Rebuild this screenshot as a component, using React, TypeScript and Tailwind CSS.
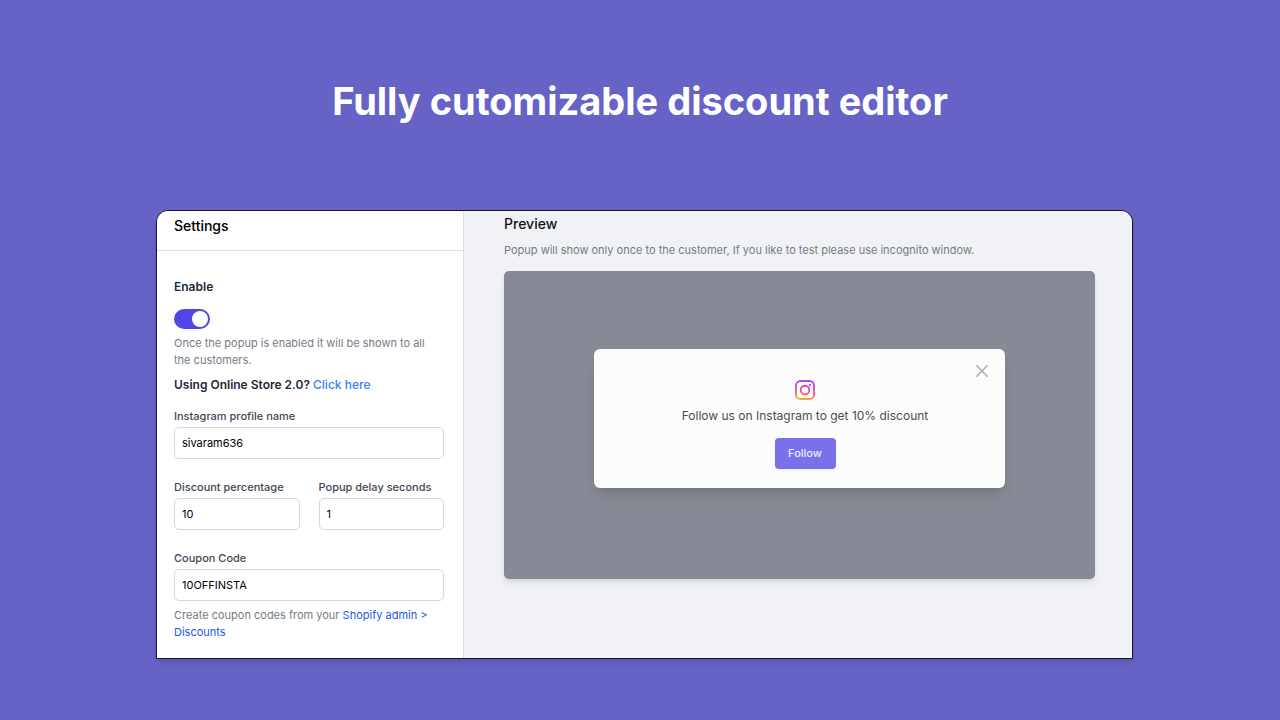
import { useState } from 'react';

const INPUT = 'block w-full h-8 rounded-[5px] border border-[#d5d7e0] bg-white px-[7px] text-[11px] text-black';
const LABEL = 'block mb-[3px] text-[11px] leading-4 font-medium text-[#414855]';
const HINT = 'mt-[6px] text-[11px] leading-[17px] text-[#747b88]';

function InstagramIcon() {
  return (
    <svg viewBox="0 0 20 20" className="size-5" fill="none" stroke="url(#insta)" aria-hidden="true">
      <defs>
        <linearGradient id="insta" gradientUnits="userSpaceOnUse" x1="11" y1="0" x2="8" y2="20">
          <stop offset="0" stopColor="#a348f5" />
          <stop offset="0.35" stopColor="#e545c4" />
          <stop offset="0.65" stopColor="#fb5a78" />
          <stop offset="1" stopColor="#fdb52e" />
        </linearGradient>
      </defs>
      <rect x="1" y="1" width="18" height="18" rx="4.6" strokeWidth="1.9" />
      <circle cx="10" cy="10" r="4.3" strokeWidth="1.9" />
      <circle cx="15" cy="5" r="1.2" fill="#d64bdc" stroke="none" />
    </svg>
  );
}

function SettingsPanel() {
  const [enabled, setEnabled] = useState(true);
  const [profile, setProfile] = useState('sivaram636');
  const [percentage, setPercentage] = useState('10');
  const [delay, setDelay] = useState('1');
  const [coupon, setCoupon] = useState('10OFFINSTA');

  return (
    <aside className="w-[307px] shrink-0 bg-white border-r border-[#dcdee5] pb-[17px]">
      <div className="px-[17px] pt-[3px] pb-3 border-b border-[#dcdee5]">
        <h2 className="text-[14px] leading-6 font-medium text-black">Settings</h2>
      </div>

      <form className="pl-[17px] pr-[19px] pt-[26px]">
        <label htmlFor="enable" className="block text-[12px] leading-5 font-semibold text-[#222937]">Enable</label>
        <div className="relative mt-3 h-5 w-9">
          <input
            id="enable"
            type="checkbox"
            role="switch"
            checked={enabled}
            onChange={(e) => setEnabled(e.target.checked)}
            className="peer block h-5 w-9 appearance-none rounded-full bg-gray-300 checked:bg-[#4f46e5] cursor-pointer"
          />
          <span className="pointer-events-none absolute left-0.5 top-0.5 size-4 rounded-full bg-white transition peer-checked:translate-x-4" />
        </div>
        <p className={HINT}>
          Once the popup is enabled it will be shown to all the customers.
        </p>
        <p className="mt-[6px] text-[12px] leading-5 font-semibold text-[#222937]">
          Using Online Store 2.0? <a href="#" className="font-medium text-[#3b82f6]">Click here</a>
        </p>

        <div className="mt-[13px]">
          <label htmlFor="profile" className={LABEL}>Instagram profile name</label>
          <input id="profile" className={INPUT} value={profile} onChange={(e) => setProfile(e.target.value)} />
        </div>

        <div className="mt-5 grid grid-cols-2 gap-[19px]">
          <div>
            <label htmlFor="percentage" className={LABEL}>Discount percentage</label>
            <input id="percentage" className={INPUT} value={percentage} onChange={(e) => setPercentage(e.target.value)} />
          </div>
          <div>
            <label htmlFor="delay" className={LABEL}>Popup delay seconds</label>
            <input id="delay" className={INPUT} value={delay} onChange={(e) => setDelay(e.target.value)} />
          </div>
        </div>

        <div className="mt-5">
          <label htmlFor="coupon" className={LABEL}>Coupon Code</label>
          <input id="coupon" className={INPUT} value={coupon} onChange={(e) => setCoupon(e.target.value)} />
        </div>
        <p className={HINT}>
          Create coupon codes from your <a href="#" className="text-[#2457e6]">Shopify admin &gt; Discounts</a>
        </p>
      </form>
    </aside>
  );
}

function Preview() {
  return (
    <section className="flex-1 min-w-0 bg-[#f1f2f6] pl-10 pr-[37px]">
      <h2 className="pt-px text-[14px] leading-6 font-medium text-[#111318]">Preview</h2>
      <p className="mt-[6px] text-[11px] leading-4 text-[#747b88]">
        Popup will show only once to the customer, If you like to test please use incognito window.
      </p>
      <div className="mt-[13px] h-[308px] rounded-[5px] bg-[#868a94] shadow-md px-[90px] pt-[78px]">
        <div className="relative flex h-[139px] flex-col items-center rounded-md bg-[#fcfcfc] pt-[31px] pl-[11px] shadow-lg">
          <button type="button" aria-label="Close" className="absolute right-4 top-[15px] text-[#a6abb6]">
            <svg viewBox="0 0 14 14" className="size-[14px]" stroke="currentColor" strokeWidth="1.5" strokeLinecap="round">
              <path d="M1.8 1.8l10.4 10.4M12.2 1.8L1.8 12.2" />
            </svg>
          </button>
          <InstagramIcon />
          <p className="mt-[6px] text-[12px] leading-5 text-[#4d4d4f]">Follow us on Instagram to get 10% discount</p>
          <button type="button" className="mt-3 h-[31px] w-[61px] rounded-[4px] bg-[#7970ea] text-[11px] font-medium text-[#eeecfc] shadow-xs">
            Follow
          </button>
        </div>
      </div>
    </section>
  );
}

export default function App() {
  return (
    <main className="min-h-screen bg-[#6762c6] pt-[76px] pb-[61px] font-['Inter',sans-serif]">
      <h1 className="text-center text-[38px] leading-[50px] font-bold text-white">Fully cutomizable discount editor</h1>
      <div className="mt-[84px] ml-[156px] mr-[147px] flex overflow-hidden rounded-t-xl border border-[#16161d] shadow-md">
        <SettingsPanel />
        <Preview />
      </div>
    </main>
  );
}
